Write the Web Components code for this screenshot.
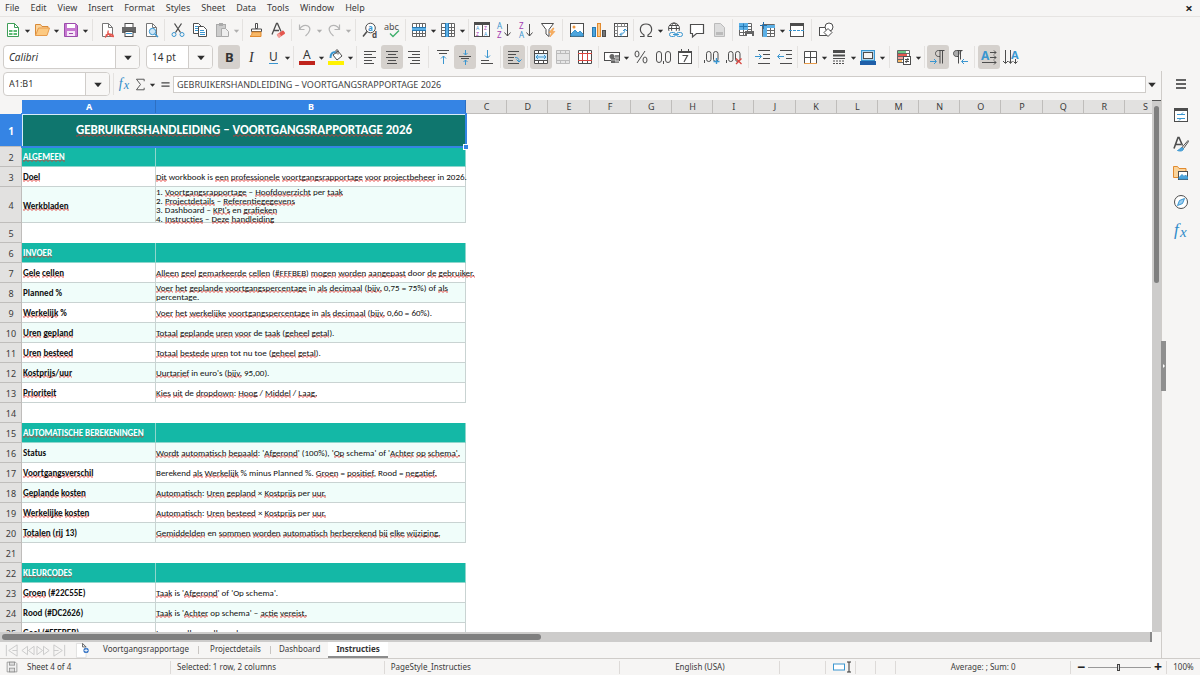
<!DOCTYPE html>
<html lang="en">
<head>
<meta charset="utf-8">
<title>Voortgangsrapportage – Calc</title>
<style>
  html, body { height: 100%; margin: 0; }
  body { font: 9px/12px "Noto Sans", "Open Sans", sans-serif; color: #3b3b3b; background: #f6f5f4; overflow: hidden; }
</style>
</head>
<body>
<calc-app></calc-app>

<script>
const BASE = `
  * { box-sizing: border-box; }
  button, input { font: inherit; color: inherit; margin: 0; padding: 0; border: 0; background: none; outline: none; border-radius: 0; }
  svg { display: block; }
`;

/* ---------- icons: 16 x 16 drawings ---------- */
const G = '#4d4d4d', B = '#3a96d0', R = '#d8453f';
const p = (d, s = G, f = 'none', w = 1) => `<path d="${d}" stroke="${s}" fill="${f}" stroke-width="${w}"/>`;
const r = (x, y, w, h, f, s = 'none') => `<rect x="${x}" y="${y}" width="${w}" height="${h}" fill="${f}" stroke="${s}"/>`;
const t = (x, y, c, f, size, extra = '') => `<text x="${x}" y="${y}" fill="${f}" font-size="${size}" ${extra}>${c}</text>`;
const gridLines = p('M1.5 1.5h13v13h-13zM1.5 5.5h13M1.5 8.500h13M1.5 11.5h13M5.5 1.5v13M8.500 1.5v13M11.5 1.5v13', '#666');

const ICONS = {
  new: p('M2.500 1.500h7l4 4v9h-11z', '#3f9e58', '#fff') + p('M9.500 1.500v4h4', '#3f9e58') + r(4, 8, 8, 5, '#5dbb74') + p('M4 10.500h8M8 8v5', '#fff'),
  open: p('M1.500 13.500v-11h5l1.500 2h6v3', '#d98a36', '#fbd49b') + p('M1.500 13.500l3-7.500h11l-2.500 7.500z', '#e79b4b', '#fcc981'),
  save: p('M1.500 1.500h11l2 2v11h-13z', '#9b4bab', '#c678d0') + r(4, 2, 8, 4, '#fff') + r(4, 9, 8, 5, '#f6e6f8') + p('M6 11.500h4', '#9b4bab'),
  pdf: p('M3.500 1.500h6l4 4v9h-10z', '#777', '#fff') + p('M9.500 1.500v4h4', '#777') + p('M6 15.500c2.500-2 3.500-5 3-7M8.500 10c1 3 4 4.500 6.500 4.500M6.500 13.500c2-2 6-2 8 0', '#e4574f', 'none', 1.3),
  print: r(4, 1.5, 8, 4, '#fff', G) + r(1, 5, 14, 6, '#666') + r(4, 9.5, 8, 5, '#fff', G) + p('M5 11.500h6', B),
  preview: p('M3.500 1.500h6l4 4v9h-10z', '#777', '#fff') + p('M9.500 1.500v4h4', '#777') + '<circle cx="9.500" cy="9.500" r="3.200" fill="#cfe7f7" stroke="#3a96d0"/>' + p('M12 12l3 3', B, 'none', 1.5),
  cut: p('M4.500 1.500l6 9M11.500 1.500l-6 9', G, 'none', 1.3) + '<circle cx="4" cy="12.500" r="2" fill="none" stroke="#3a96d0"/><circle cx="12" cy="12.500" r="2" fill="none" stroke="#3a96d0"/>',
  copy: p('M1.500 1.500h5l3 3v7h-8z', G, '#fff') + p('M3 4.500h3M3 6.500h4M3 8.500h4', B) + p('M6.500 4.500h5l3 3v7h-8z', G, '#fff') + p('M8 8.500h4M8 10.500h5M8 12.500h5', B),
  paste: r(2.5, 2.5, 9, 12, '#ccc', '#aaa') + r(5, 1, 4, 3, '#aaa') + p('M7.500 6.500h4l3 3v5h-7z', '#aaa', '#eee'),
  brush: p('M7.500 1.500h2v5h-2z', G, '#fff') + p('M3.500 9.500v-2.500h10v2.500z', G, '#fff') + p('M4 10h9v4.500h-11c1.500-1 2-2.500 2-4.500z', '#e18a2f', '#f7b868'),
  clear: p('M2 12.500l4.500-11h1l3.500 8M4 8.500h5', G, 'none', 1.3) + '<g transform="rotate(-35 11 12)"><rect x="7" y="10" width="8" height="4" rx="1" fill="#e4574f"/><rect x="7" y="10" width="3" height="4" fill="#f4a09b"/></g>',
  undo: p('M2.500 2.500v5h5M2.500 7.500c2-4 6-5 8.500-3.500 3 2 2.500 5.500-2.500 10', '#b5b5b5', 'none', 1.2),
  redo: p('M13.500 2.500v5h-5M13.500 7.500c-2-4-6-5-8.500-3.500-3 2-2.500 5.500 2.500 10', '#b5b5b5', 'none', 1.2),
  find: '<circle cx="8.500" cy="6" r="4.800" fill="#fff" stroke="#4d4d4d"/>' + p('M5 9.500l-4 5', G, 'none', 1.5) + t(6, 8.5, 'a', B, 8, 'font-weight="bold"') + t(10, 15.500, 'd', G, 8, 'font-weight="bold"'),
  spell: t(0, 8, 'abc', G, 9) + p('M6 11.500l3 3 6-6', '#3faf6c', 'none', 1.4),
  row: r(1, 1, 14, 14, '#fff') + gridLines + r(1, 5, 14, 4, '#5cb0e6') + p('M1 5.500h14M1 8.500h14', '#2779b3'),
  column: r(1, 1, 14, 14, '#fff') + gridLines + r(5, 1, 4, 14, '#5cb0e6') + p('M5.500 1v14M8.500 1v14', '#2779b3'),
  sort: r(.5, 1.500, 15, 13, '#fff', G) + r(0, 0, 16, 3, G) + p('M8.500 2v13') + t(2, 8, 'A', B, 5) + t(2, 14, 'Z', '#a23bb0', 5) + t(10, 8, 'Z', '#a23bb0', 5) + t(10, 14, 'A', B, 5),
  asc: t(1, 7, 'A', B, 8) + t(1, 16, 'Z', '#a23bb0', 8) + p('M11.500 2v12M8.500 10.500l3 3.500 3-3.500'),
  desc: t(1, 7, 'Z', '#a23bb0', 8) + t(1, 16, 'A', B, 8) + p('M11.500 2v12M8.500 10.500l3 3.500 3-3.500'),
  filter: p('M1.500 1.500h12l-4.500 6v7l-3-2.500v-4.500z', G, '#fff') + p('M13 6l-4 4.500h2.500l-1.500 4.500 5-5.500h-2.500l1.500-3.500z', '#f0953c', '#f7b060', .5),
  image: r(1.500, 1.500, 13, 13, '#fff', G) + p('M2 12l4-4 3 3 2-2 3 3v2h-12z', B, '#4da5dd') + '<circle cx="5" cy="5" r="1.500" fill="#f0953c"/>',
  chart: r(1.500, 5.500, 3, 9, '#4da5dd', '#2779b3') + r(6.500, 1.500, 3, 13, '#fbc98a', '#e18a2f') + r(11.500, 8.500, 3, 6, '#777', G),
  pivot: r(1.500, 1.500, 13, 13, '#fff', G) + p('M1.500 4.500h13M4.500 1.500v13M8.500 1.500v3M11.500 1.500v3M1.500 8.500h3M1.500 11.500h3', '#888') + p('M7 12.500c3 0 5-2 5-5.500M9 10.500l-2 2 2 2M10 9l2-2 2 2', B),
  omega: p('M2 14.500h4v-1.500c-6-4-4-11 2-11s8 7 2 11v1.500h4', G, 'none', 1.2),
  link: '<circle cx="7" cy="6.500" r="5.500" fill="#fff" stroke="#4d4d4d"/><ellipse cx="7" cy="6.500" rx="2.500" ry="5.500" fill="none" stroke="#4d4d4d"/>' + p('M1.500 6.500h11M2.500 3.500h9') + r(1, 9, 15, 7, '#f6f5f4') + '<rect x="2.500" y="10.500" width="6" height="4" rx="2" fill="none" stroke="#3a96d0"/><rect x="9.500" y="10.500" width="6" height="4" rx="2" fill="none" stroke="#3a96d0"/>' + p('M6 12.500h6', B),
  comment: p('M1.500 2.500h13v9h-7l-4 3.500v-3.500h-2z', G, '#fff', 1.2),
  header: p('M3.500 1.500h6l4 4v9h-10z', '#bbb', '#ddd') + r(5, 10, 7, 3, '#bbb'),
  printRange: r(1, 1, 13, 12, '#fff') + p('M1.500 1.500h12v12h-12zM1.500 4.500h12M1.500 7.500h12M1.500 10.500h12M5.500 1.500v12M9.500 1.500v12', '#666') + r(1, 1, 9, 7, '#5cb0e6') + p('M1.500 4.500h8M5.500 1.500v6', '#2779b3') + r(7, 9, 9, 5, '#666') + r(9, 12, 5, 3, '#fff'),
  freeze: r(2, 2, 13, 13, '#fff') + p('M2.500 2.500h12v12h-12zM2.500 5.500h12M2.500 8.500h12M2.500 11.500h12M6.500 2.500v12M10.500 2.500v12', '#666') + r(3, 3, 12, 3, '#5cb0e6') + r(3, 3, 4, 12, '#5cb0e6') + p('M3.500 0v7M0 3.500h7', '#1f6fae'),
  split: r(1.500, 1.500, 13, 13, '#fff', G) + r(1, 1, 14, 3, G) + '<path d="M0 8.500h16" stroke="#3a96d0" stroke-dasharray="3 1"/>',
  shapes: r(1.500, 5.500, 8, 8, '#fff', G) + '<circle cx="11" cy="5" r="4" fill="#fff" stroke="#4d4d4d"/>' + p('M10 6.500l4 4-4 4-4-4z', G, '#fff'),
  bold: t(4, 13, 'B', '#333', 13, 'font-weight="bold"'),
  italic: '<text x="6" y="13" fill="#333" font-size="14" font-style="italic" font-family="Liberation Serif">I</text>',
  underline: t(4, 12, 'U', '#333', 12) + p('M4 14.500h9', B),
  fontColor: t(4, 10, 'A', '#333', 12) + r(0, 12, 16, 4, '#c0241c'),
  highlight: p('M5 6l5-4 4 5-5 4z', G, '#fff') + p('M8 5v-3.500c0-1 2-1 2 0v4') + p('M2.500 9c0-4 1-6 5-6', B, 'none', 2) + r(0, 12, 16, 4, '#fff200'),
  left: p('M2 2.500h12M2 5.500h8M2 8.500h12M2 11.500h8M2 14.500h10'),
  center: p('M2 2.500h12M4 5.500h8M2 8.500h12M4 11.500h8M3 14.500h10'),
  right: p('M2 2.500h12M6 5.500h8M2 8.500h12M6 11.500h8M4 14.500h10'),
  top: p('M2 1.500h12M4 4.500h8') + p('M8.500 15v-8M6 9.500l2.500-2.500 2.500 2.500', B),
  middle: p('M2 7.500h12M4 9.500h8') + p('M8.500 1v5M6.500 4l2 2 2-2M8.500 16v-5M6.500 13l2-2 2 2', B),
  bottom: p('M2 11.500h8M2 14.500h12') + p('M8.500 1v8M6 6.500l2.500 2.500 2.500-2.500', B),
  wrap: p('M2 2.500h11M2 5.500h8M2 8.500h6M2 11.500h5M2 14.500h11') + p('M9 8.500c3 0 4 1 4 4M10.500 10.500l2.500 2.500 2.500-2.500', B),
  merge: r(1, 1, 14, 14, '#fff') + p('M1.500 1.500h13v13h-13zM1.500 4.500h13M1.500 11.500h13M5.500 1.500v3M10.500 1.500v3M5.500 11.500v3M10.500 11.500v3') + r(2, 5, 12, 6, '#d9eefb') + p('M3 8h10M5 6l-2 2 2 2M11 6l2 2-2 2', B),
  mergeOff: p('M1.500 1.500h13v13h-13zM1.500 4.500h13M1.500 11.500h13M5.500 1.500v3M10.500 1.500v3M5.500 11.500v3M10.500 11.500v3', '#bbb', '#e6e6e6'),
  unmerge: r(1, 1, 14, 14, '#fff') + p('M1.500 1.500h13v13h-13zM5.500 1.500v4M10.500 1.500v4M5.500 11v4M10.500 11v4') + p('M1 4.500h14M1 11.500h14M5.500 5v6M10.500 5v6', R),
  currency: r(.5, 3.500, 15, 8, '#fff', G) + '<circle cx="8" cy="7.500" r="2.500" fill="#666"/>' + r(7, 9, 5, 5, '#666') + r(11, 6, 4, 8, '#888') + p('M7 11h5M11 9h4M11 12h4', '#fff', 'none', .6),
  percent: '<ellipse cx="4" cy="5" rx="2" ry="3" fill="none" stroke="#4d4d4d"/><ellipse cx="12" cy="11" rx="2" ry="3" fill="none" stroke="#4d4d4d"/>' + p('M12 2l-8 12'),
  number: '<rect x="1.500" y="2.500" width="5" height="11" rx="2.500" fill="none" stroke="#4d4d4d"/><rect x="10.500" y="2.500" width="5" height="11" rx="2.500" fill="none" stroke="#4d4d4d"/>' + p('M8.500 12v3'),
  date: r(1.500, 2.500, 13, 12, '#fff', G) + r(1, 2, 14, 2, G) + p('M4.500 0v3M11.500 0v3') + p('M5.500 6.500h5l-3.500 6.500', G, 'none', 1.2),
  addDec: p('M.5 11v3') + '<rect x="2.500" y="2.500" width="4.500" height="10" rx="2.200" fill="none" stroke="#4d4d4d"/><rect x="9.500" y="2.500" width="4.500" height="10" rx="2.200" fill="none" stroke="#4d4d4d"/>' + p('M12.500 9v6M9.500 12.500h6', B, 'none', 1.4),
  delDec: p('M.5 11v3') + '<rect x="2.500" y="2.500" width="4.500" height="10" rx="2.200" fill="none" stroke="#4d4d4d"/><rect x="9.500" y="2.500" width="4.500" height="10" rx="2.200" fill="none" stroke="#4d4d4d"/>' + p('M10 9.500l5.500 5.500M15.500 9.500l-5.500 5.500', R, 'none', 1.3),
  indent: p('M3 1.500h12M8 5.500h7M8 9.500h7M3 14.500h12') + p('M0 7.500h6M4 5l2.500 2.500-2.500 2.500', B),
  outdent: p('M3 1.500h12M9 5.500h6M9 9.500h6M3 14.500h12') + p('M7 7.500h-6M3 5l-2.500 2.500 2.500 2.500', B),
  borders: p('M2.500 14v-11.500h12v11.500M8.500 3v11M3 8.500h11', G, '#fff') + p('M2 14.500h13', '#e79b4b'),
  lines: p('M2 2.500h12', G, 'none', 3) + p('M2 6.500h12', G, 'none', 2) + p('M2 9.500h12') + '<path d="M2 12h12M2 14.500h12" stroke="#4d4d4d" stroke-dasharray="2 1"/>',
  lineColor: r(1.500, 1.500, 13, 10, '#a9d4f1', B) + r(3.500, 3.500, 9, 6, '#f6f5f4', G) + r(0, 12, 16, 4, '#1f5fa8'),
  conditional: r(1, 1, 13, 12, '#fff') + p('M1.500 1.500h12v12h-12zM1.500 4.500h12M1.500 7.500h12M1.500 10.500h12M5.500 1.500v12M9.500 1.500v12', '#666') + r(2, 2, 8, 2, '#6cc887') + r(2, 5, 9, 2, '#e4574f') + r(2, 8, 5, 2, '#f4a09b') + r(2, 11, 4, 2, '#f7b868') + r(7.500, 7.500, 7, 8, '#fff', G) + p('M9 10.500h4M9 12.500h4M12 9l-2 5'),
  ltr: p('M14.500 1.500h-6c-4 0-4 6 0 6h1.500M10 1.500v13M12.500 1.500v13', G) + p('M0 12.500h6M4 10l2.500 2.500-2.500 2.500', B),
  rtl: p('M10.500 1.500h-6c-4 0-4 6 0 6h1.500', G, '#aaa') + p('M6.500 1.500v13M8.500 1.500v9', G) + p('M16 12.500h-6M12 10l-2.500 2.500 2.500 2.500', B),
  textH: t(0, 11, 'A', B, 12, 'font-weight="bold"') + p('M9 3.500h6M13 1.500l2 2-2 2M9 8.500h6M13 6.500l2 2-2 2M1 13.500h14M13 11.500l2 2-2 2'),
  textV: t(8, 10, 'A', B, 11, 'font-weight="bold"') + p('M2.500 1v13M0 12l2.500 2.500 2.500-2.500M7.500 1v13M5.500 12l2 2.500 2-2.500M12.500 10v4.500M10.500 12.500l2 2 2-2'),
  fx: '<text x="1" y="12" fill="#2f8bc9" font-size="17" font-style="italic" font-family="Liberation Serif">f</text><text x="7" y="14" fill="#2f8bc9" font-size="15" font-style="italic" font-family="Liberation Serif">x</text>',
  sigma: p('M12.500 4v-2.500h-9.500l5 6.500-5 6.500h9.500v-2.500', '#555', 'none', 1.2),
  equals: p('M3 6h10M3 10h10', '#444', 'none', 1.8),
  menu: p('M3 4h10M3 8h10M3 12h10', '#333', 'none', 1.5),
  properties: r(1.500, 1.500, 13, 13, '#fff', G) + r(1, 1, 14, 3, G) + p('M4 7.500h8M4 11.500h8M8 7.500l2-2M8 11.500l-2 2', B),
  styles: p('M1 12.500l4-11h1l3.500 8M2.500 8.500h5.500', G, 'none', 1.6) + p('M15 4.500l-6 7 1.500 1 5-7z', G, '#fff') + p('M9 11.500c-2 0-2 2.500-4.500 3 3 1 6 .5 6-2', B, '#4da5dd'),
  gallery: p('M.5 12.500v-11h4l1.500 2h7v9z', '#e18a2f', '#fbd49b') + r(5.500, 6.500, 9, 8, '#fff', G) + p('M6 12.500l3-3 2 2 1.500-1.500 2 2v2h-8.500z', B, '#4da5dd'),
  navigator: '<circle cx="8" cy="8" r="6.500" fill="#fff" stroke="#4d4d4d"/>' + p('M11.500 4.500l-2 5-5 2 2-5z', B, '#9ccdf0'),
  addSheet: p('M.5 .5h7l4 4v12h-11z', '#ddd', '#fff') + p('M7.500 .5v4h4z', '#555') + '<circle cx="11.500" cy="8.500" r="3" fill="#3473c4"/>' + p('M9.500 8.500h4M11.500 6.500v4', '#fff'),
  first: p('M2.500 2v12M14 2l-9 6 9 6zM9 8h5', '#c9c9c9'),
  prev: p('M8 3.500l-6 4.500 6 4.500zM15 3.500l-6 4.500 6 4.500z', '#c9c9c9'),
  next: p('M1 3.500l6 4.500-6 4.500zM8 3.500l6 4.500-6 4.500z', '#c9c9c9'),
  last: p('M13.500 2v12M2 2l9 6-9 6zM2 8h5', '#c9c9c9'),
  doc: p('M1.500 1.500h11l2 2v11h-13z', '#8a8a8a', '#f2f2f2') + r(4.500, 1.500, 7, 4, '#ddd', '#8a8a8a') + r(4.500, 9.500, 7, 5, '#ddd', '#8a8a8a'),
  selection: r(.5, 5, 11, 6, '#fff', B) + p('M14 3h4M16 3v10M14 13h4', '#333'),
  arrow: '<path d="M1 3h6l-3 3.500z" fill="#2e2e2e"/>'
};

class Component extends HTMLElement {
  connectedCallback() {
    if (this.shadowRoot) return;
    this.attachShadow({ mode: 'open' }).innerHTML = `<style>${BASE}${this.styles()}</style>${this.markup()}`;
  }
  styles() { return ''; }
  markup() { return '<slot></slot>'; }
}
const define = (name, styles, markup = () => '<slot></slot>') =>
  customElements.define(name, class extends Component {
    styles() { return styles; }
    markup() { return markup(this); }
  });

define('calc-icon',
  `:host { display: block; flex: none; width: 16px; height: 16px; }
   svg { width: 100%; height: 100%; overflow: visible; }`,
  el => `<svg viewBox="${el.getAttribute('name') === 'arrow' ? '0 0 8 8' : '0 0 16 16'}" aria-hidden="true">${ICONS[el.getAttribute('name')]}</svg>`);

define('tool-button',
  `:host { display: flex; flex: none; }
   button { display: grid; place-items: center; height: 24px; }
   .main { width: 22px; border-radius: 3px; }
   .main[aria-pressed=true] { background: #d5d1cd; }
   .drop { width: 7px; }
   .drop calc-icon { width: 7px; height: 7px; }
   :host([off]) .drop { opacity: .35; }`,
  el => {
    const n = el.getAttribute('icon'), off = el.hasAttribute('off') ? 'disabled' : '';
    return `<button class="main" aria-label="${n}" aria-pressed="${el.hasAttribute('pressed')}" ${off}><calc-icon name="${n}"></calc-icon></button>` +
      (el.hasAttribute('menu') ? `<button class="drop" aria-label="${n} options" ${off}><calc-icon name="arrow"></calc-icon></button>` : '');
  });

define('tool-sep',
  `:host { display: block; flex: none; width: 5px; height: 22px; background: linear-gradient(#e4e2e0, #e4e2e0) center / 1px 100% no-repeat; }
   :host([wide]) { width: 7px; } :host([tight]) { width: 3px; }`, () => '');

define('combo-box',
  `:host { display: flex; flex: none; height: 24px; border: 1px solid #d0cdca; border-radius: 4px; background: #fff; overflow: hidden; }
   input { flex: 1; min-width: 0; padding-left: 5px; font-size: 10px; color: #333; }
   :host(.name) input { font-size: 9px; }
   :host([slanted]) input { font-style: italic; }
   button { width: 24px; border-left: 1px solid #d0cdca; background: #f8f7f6; display: grid; place-items: center; }
   calc-icon { width: 10px; height: 10px; }`,
  el => `<input aria-label="${el.getAttribute('label')}" value="${el.getAttribute('value')}"><button aria-label="${el.getAttribute('label')} list"><calc-icon name="arrow"></calc-icon></button>`);

define('menu-bar',
  `:host { display: flex; align-items: center; height: 17px; padding: 0 5px; gap: 11px; border-bottom: 1px solid #e6e4e2; font-size: 9px; }
   .close { margin-left: auto; font-weight: bold; font-size: 13px; width: 12px; color: #222; }`,
  () => ['File', 'Edit', 'View', 'Insert', 'Format', 'Styles', 'Sheet', 'Data', 'Tools', 'Window', 'Help'].map(m => `<button>${m}</button>`).join('') +
    '<button class="close" aria-label="Close">×</button>');

/* A bar spec: "name" button, "name+" with drop-down, "!" pressed, "~" disabled, "|" separators */
const bar = spec => spec.split(' ').map(w => {
  if (w[0] === '|') return `<tool-sep ${w === '|w' ? 'wide' : w === '|t' ? 'tight' : ''}></tool-sep>`;
  return `<tool-button icon="${w.replace(/[+!~]/g, '')}" ${w.includes('+') ? 'menu' : ''} ${w.includes('!') ? 'pressed' : ''} ${w.includes('~') ? 'off' : ''}></tool-button>`;
}).join('');

define('standard-bar',
  `:host { display: flex; align-items: center; height: 26px; padding-left: 2px; }`,
  () => bar('new+ open+ save+ |w pdf print preview | cut copy paste+~ | brush clear | undo+~ redo+~ |w find spell | row+ column+ | sort asc desc filter |w image chart pivot |t omega+ link comment header~ | printRange freeze+ split |w shapes'));

define('format-bar',
  `:host { display: flex; align-items: center; height: 28px; padding-left: 3px; }
   .font { width: 137px; margin-right: 6px; } .size { width: 67px; margin-right: 5px; }`,
  () => '<combo-box class="font" slanted label="Font" value="Calibri"></combo-box><combo-box class="size" label="Size" value="14 pt"></combo-box>' +
    bar('bold! italic underline+ | fontColor+ highlight+ | left center! right |w top middle! bottom | wrap! | merge! mergeOff~ unmerge | currency+ percent number date | addDec delDec |w indent outdent |t borders+ lines+ lineColor+ |w conditional+ | ltr! rtl |w textH! textV'));

define('formula-bar',
  `:host { display: flex; align-items: center; height: 29px; padding: 0 4px 3px 3px; }
   .name { width: 107px; margin-right: 1px; }
   button { display: grid; place-items: center; height: 20px; width: 16px; }
   button.drop { width: 9px; }
   .drop calc-icon { width: 7px; height: 7px; }
   calc-icon.s { width: 13px; height: 13px; }
   input { flex: 1; min-width: 0; height: 17px; border: 1px solid #cfccc9; background: #fff; padding-left: 3px; color: #444; }
   button.end { width: 11px; } .end calc-icon { width: 10px; height: 10px; }`,
  () => `<combo-box class="name" label="Name Box" value="A1:B1"></combo-box><tool-sep></tool-sep>
    <button aria-label="Function wizard"><calc-icon class="s" name="fx"></calc-icon></button>
    <button aria-label="Select function"><calc-icon class="s" name="sigma"></calc-icon></button>
    <button class="drop" aria-label="Function list"><calc-icon name="arrow"></calc-icon></button>
    <button class="eq" aria-label="Formula"><calc-icon class="s" name="equals"></calc-icon></button>
    <input aria-label="Input line" value="GEBRUIKERSHANDLEIDING – VOORTGANGSRAPPORTAGE 2026">
    <button class="end" aria-label="Expand"><calc-icon name="arrow"></calc-icon></button>`);

/* Words between [ and ] carry the spell-check underline. h: section row, m: mint band */
const ROWS = [
  ['t', '[GEBRUIKERSHANDLEIDING] – [VOORTGANGSRAPPORTAGE] 2026'],
  ['h', '[ALGEMEEN]', ''],
  ['', '[Doel]', '[Dit] workbook is [een] [professionele] [voortgangsrapportage] [voor] [projectbeheer] in 2026.'],
  ['m tall', '[Werkbladen]', "1. [Voortgangsrapportage] – [Hoofdoverzicht] per [taak]<br>2. [Projectdetails] – [Referentiegegevens]<br>3. Dashboard – [KPI's] en [grafieken]<br>4. [Instructies] – [Deze] [handleiding]"],
  null,
  ['h', '[INVOER]', ''],
  ['', '[Gele] [cellen]', '[Alleen] [geel] [gemarkeerde] [cellen] ([#FFFBEB]) [mogen] [worden] [aangepast] door [de] [gebruiker.]'],
  ['m', 'Planned %', '[Voer] [het] [geplande] [voortgangspercentage] in [als] [decimaal] ([bijv.] 0,75 = 75%) of [als]<br>percentage.'],
  ['', '[Werkelijk] %', '[Voer] [het] [werkelijke] [voortgangspercentage] in [als] [decimaal] ([bijv.] 0,60 = 60%).'],
  ['m', '[Uren] [gepland]', '[Totaal] [geplande] [uren] [voor] de [taak] ([geheel] [getal]).'],
  ['', '[Uren] [besteed]', '[Totaal] [bestede] [uren] tot nu toe ([geheel] [getal]).'],
  ['m', '[Kostprijs]/[uur]', "[Uurtarief] in euro's ([bijv.] 95,00)."],
  ['', '[Prioriteit]', '[Kies] [uit] de [dropdown]: [Hoog] / [Middel] / [Laag.]'],
  null,
  ['h', '[AUTOMATISCHE] [BEREKENINGEN]', ''],
  ['m', 'Status', "[Wordt] [automatisch] [bepaald]: '[Afgerond]' (100%), '[Op] schema' of '[Achter] [op] [schema'.]"],
  ['', '[Voortgangsverschil]', 'Berekend [als] [Werkelijk] % minus Planned %. [Groen] = [positief], Rood = [negatief.]'],
  ['m', '[Geplande] [kosten]', '[Automatisch]: [Uren] [gepland] × [Kostprijs] per [uur.]'],
  ['', '[Werkelijke] [kosten]', '[Automatisch]: [Uren] [besteed] × [Kostprijs] per [uur.]'],
  ['m', '[Totalen] ([rij] 13)', '[Gemiddelden] en [sommen] [worden] [automatisch] [herberekend] [bij] [elke] [wijziging.]'],
  null,
  ['h', '[KLEURCODES]', ''],
  ['', '[Groen] (#22C55E)', "[Taak] is '[Afgerond]' of 'Op schema'."],
  ['m', 'Rood (#DC2626)', "[Taak] is '[Achter] op schema' – [actie] [vereist.]"],
  ['', '[Geel] ([#FFFBEB])', '[Invoercellen] – [alleen] [deze] [aanpassen.]']
];
const spell = s => s.replace(/\[/g, '<u>').replace(/\]/g, '</u>');
const WAVE = `url("data:image/svg+xml,%3Csvg xmlns='http://www.w3.org/2000/svg' width='4' height='3'%3E%3Cpath d='M-1 0L1 2L3 0L5 2' transform='translate(0 .5)' fill='none' stroke='%23e0302c' stroke-width='.9'/%3E%3C/svg%3E")`;

define('sheet-grid',
  `:host { display: block; min-height: 0; overflow: hidden; background: #fff; }
   table { table-layout: fixed; width: 100%; border-collapse: separate; border-spacing: 0; }
   .num { width: 22px; } .a { width: 134px; } .b { width: 310px; } .cut { width: 27px; }
   th, td { padding: 0; }
   thead th { height: 14px; font-weight: normal; line-height: 14px; background: #e2e1e0; box-shadow: inset -1px -1px #bfbdbb; white-space: nowrap; }
   thead th:first-child { background: #f6f5f4; box-shadow: none; }
   thead th.sel { background: #3584e4; color: #fff; font-weight: bold; box-shadow: inset -1px 0 #2d6fc2; }
   thead th:last-child { text-align: left; padding-left: 18px; box-shadow: inset 0 -1px #bfbdbb; }
   tbody th { height: 20px; padding-top: 1px; font-weight: normal; background: #e2e1e0; box-shadow: inset -1px -1px #bfbdbb; }
   td { font: 9px/9px Carlito, Lato, sans-serif; color: #111; white-space: nowrap; padding-bottom: 2px; }
   td.label { font-weight: bold; padding-left: 1px; }
   tr.tall td { padding-bottom: 0; }
   tr.row td:not(.rest) { box-shadow: inset -1px -1px #c9d3d2; }
   tr.m td:not(.rest) { background: #f0fdfa; }
   tr.h td:not(.rest) { background: #14b8a6; color: #fff; box-shadow: inset -1px -1px #8fd6cc; }
   tr.tall th { height: 36px; }
   tr.t th { height: 33px; background: #3584e4; color: #fff; font-weight: bold; font-size: 10px; }
   tr.t td.title { position: relative; background: #0f766e; color: #fff; text-align: center; font-size: 13px; line-height: 16px; font-weight: bold; box-shadow: inset 0 0 0 1px #d8ecfb; }
   .title i { position: absolute; z-index: 1; inset: -1px; border: solid #3584e4; border-width: 1px 2px 2px 1px; }
   .title i::after { content: ""; position: absolute; right: -3px; bottom: -3px; width: 4px; height: 4px; background: #3584e4; outline: 1px solid #fff; }
   u { text-decoration: none; background: ${WAVE} 0 100% repeat-x; }`,
  () => `<table><colgroup><col class="num"><col class="a"><col class="b">${'<col>'.repeat(16)}<col class="cut"></colgroup>
    <thead><tr><th></th>${[...'ABCDEFGHIJKLMNOPQRS'].map((c, i) => `<th ${i < 2 ? 'class="sel"' : ''}>${c}</th>`).join('')}</tr></thead>
    <tbody>${ROWS.map((row, i) => {
      const n = `<th>${i + 1}</th>`;
      if (!row) return `<tr>${n}<td colspan="19"></td></tr>`;
      if (row[0] === 't') return `<tr class="t">${n}<td class="title" colspan="2">${spell(row[1])}<i></i></td><td class="rest" colspan="17"></td></tr>`;
      return `<tr class="row ${row[0]}">${n}<td class="label">${spell(row[1])}</td><td>${spell(row[2])}</td><td class="rest" colspan="17"></td></tr>`;
    }).join('')}</tbody></table>`);

define('scroll-track',
  `:host { display: block; background: #cdcccb; }
   div { background: #7f7f7f; border-radius: 3px; }
   :host([dir=v]) { width: 9px; padding: 5px 2px; border-top: 1px solid #555; }
   :host([dir=v]) div { height: 34%; }
   :host([dir=h]) { height: 10px; padding: 2px; border-right: 2px solid #8a8a8a; }
   :host([dir=h]) div { width: 47%; height: 6px; }`, () => '<div></div>');

define('sheet-tabs',
  `:host { display: flex; height: 16px; font-size: 8px; }
   nav { display: flex; align-items: center; padding-left: 4px; width: 74px; }
   nav button { width: 16px; }
   nav calc-icon { width: 15px; height: 15px; }
   .add { width: 18px; display: grid; place-items: center; } .add calc-icon { width: 14px; height: 14px; }
   .tabs { display: flex; }
   .tabs button { position: relative; padding: 0 10px 0 11px; height: 16px; line-height: 14px; display: flex; }
   .tabs button:nth-child(-n+2)::after { content: ""; position: absolute; right: 0; top: 4px; height: 8px; border-right: 1px solid #c8c5c2; }
   .tabs button:nth-child(3), .tabs button:nth-child(4) { padding: 0 8px; }
   .tabs button[aria-selected=true] { background: #fff; font-weight: bold; box-shadow: inset 0 -2px #8c8c8c; color: #333; }`,
  () => `<nav>${['first', 'prev', 'next', 'last'].map(n => `<button aria-label="${n} sheet"><calc-icon name="${n}"></calc-icon></button>`).join('')}</nav>
    <button class="add" aria-label="Add sheet"><calc-icon name="addSheet"></calc-icon></button>
    <div class="tabs" role="tablist">${['Voortgangsrapportage', 'Projectdetails', 'Dashboard', 'Instructies'].map((s, i) => `<button role="tab" aria-selected="${i === 3}">${s}</button>`).join('')}</div>`);

define('side-bar',
  `:host { position: relative; display: flex; flex-direction: column; align-items: center; gap: 9px; width: 39px; padding-top: 3px; border-left: 1px solid #cfccc9; }
   button { width: 24px; height: 20px; display: grid; place-items: center; }
   button:first-of-type { margin-bottom: 2px; }
   .handle { position: absolute; left: -1px; top: 46%; width: 5px; height: 50px; background: #8f8f8f; display: grid; place-items: center; }
   .handle::after { content: ""; border: 2px solid transparent; border-left-color: #fff; border-right: 0; }`,
  () => ['menu', 'properties', 'styles', 'gallery', 'navigator', 'fx'].map(n => `<button aria-label="${n}"><calc-icon name="${n}"></calc-icon></button>`).join('') + '<div class="handle"></div>');

define('status-bar',
  `:host { display: grid; grid-template-columns: 171px 214fr 236fr 160fr 46fr 30px 20px 20px 175fr 96px 33px; height: 17px; align-items: center; border-top: 1px solid #cfccc9; font-size: 8px; }
   .cell, .zoom { display: flex; align-items: center; height: 13px; border-right: 1px solid #dddad8; padding-left: 6px; white-space: nowrap; }
   .doc { gap: 9px; } .doc calc-icon { width: 12px; height: 12px; }
   .zoom { gap: 1px; padding: 0 2px 0 4px; justify-content: center; }
   .zoom button { width: 12px; height: 12px; display: grid; place-items: center; font-size: 14px; font-weight: bold; color: #222; }
   input { flex: 1; min-width: 0; height: 12px; appearance: none; background: linear-gradient(#999, #999) center / 100% 1px no-repeat; }
   input::-webkit-slider-thumb { appearance: none; width: 3px; height: 7px; border: 1px solid #444; background: #ddd; }
   .cell.mid { padding: 0; justify-content: center; }
   .cell.pct { border: 0; padding: 0; justify-content: center; }`,
  () => `<div class="cell doc"><calc-icon name="doc"></calc-icon>Sheet 4 of 4</div><div class="cell">Selected: 1 row, 2 columns</div><div class="cell">PageStyle_Instructies</div>
    <div class="cell mid">English (USA)</div><div class="cell"></div><div class="cell mid"><calc-icon name="selection"></calc-icon></div><div class="cell"></div><div class="cell"></div>
    <div class="cell mid">Average: ; Sum: 0</div>
    <div class="zoom"><button aria-label="Zoom out">−</button><input type="range" aria-label="Zoom" min="0" max="100" value="49"><button aria-label="Zoom in">+</button></div>
    <div class="cell pct">100%</div>`);

define('calc-app',
  `:host { display: flex; flex-direction: column; height: 100vh; }
   .middle { flex: 1; min-height: 0; display: grid; grid-template-columns: minmax(0, 1fr) auto; }
   .doc { display: flex; flex-direction: column; min-height: 0; }
   .view { flex: 1; min-height: 0; display: grid; grid-template-columns: minmax(0, 1fr) 9px; grid-template-rows: minmax(0, 1fr) 10px; }`,
  () => `<menu-bar></menu-bar><standard-bar></standard-bar><format-bar></format-bar>
    <div class="middle"><div class="doc"><formula-bar></formula-bar>
      <div class="view"><sheet-grid></sheet-grid><scroll-track dir="v"></scroll-track><scroll-track dir="h"></scroll-track></div>
      <sheet-tabs></sheet-tabs></div><side-bar></side-bar></div>
    <status-bar></status-bar>`);
</script>
</body>
</html>
